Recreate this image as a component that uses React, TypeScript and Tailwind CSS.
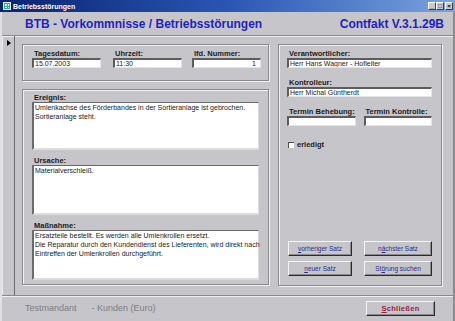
import React from 'react';

const font = { fontFamily: '"Liberation Sans", Arial, sans-serif' };

function Label({ children }: { children: React.ReactNode }) {
    return <div className="h-[9px] text-[7.5px] leading-[9px] font-bold text-[#1c1c1c] pl-[2px] whitespace-nowrap">{children}</div>;
}

function Field({ value, right, className }: { value?: string; right?: boolean; className?: string }) {
    return (
        <div
            className={`h-[10px] bg-white border-t-[2px] border-l-[2px] border-t-[#5c5c5c] border-l-[#5c5c5c] border-b border-r border-b-[#e4e4e4] border-r-[#e4e4e4] text-[7px] leading-[8px] text-[#1a1a1a] px-[1px] whitespace-nowrap overflow-hidden ${right ? 'text-right pr-[4px]' : ''} ${className ?? ''}`}
        >
            {value}
        </div>
    );
}

function Memo({ lines, h }: { lines: string[]; h: string }) {
    return (
        <div className={`${h} bg-white border-t border-l-[2px] border-t-[#6a6a6a] border-l-[#6a6a6a] border-b-[2px] border-r border-b-[#dcdcdc] border-r-[#dcdcdc] text-[7px] leading-[9px] text-[#1a1a1a] px-[1px]`}>
            {lines.map((l) => (
                <div key={l} className="whitespace-nowrap">{l}</div>
            ))}
        </div>
    );
}

function Btn({ children, className }: { children: React.ReactNode; className?: string }) {
    return (
        <div
            className={`h-[15px] flex items-center justify-center border border-t-[#f4f4f4] border-l-[#f4f4f4] border-b-[#2c2c2c] border-r-[#2c2c2c] shadow-[inset_-1px_-1px_0_#8a8a8a] text-[6.5px] text-[#2b2b8e] ${className ?? ''}`}
        >
            {children}
        </div>
    );
}

const frame = 'border border-[#8a8a8c] shadow-[inset_1px_1px_0_#f2f2f2,1px_1px_0_#f2f2f2]';

export default function App() {
    return (
        <div className="w-[455px] h-[321px] bg-[#c6c6ca] flex flex-col overflow-hidden" style={font}>
            {/* title bar */}
            <div className="h-[12px] flex items-center pl-[3px] pr-[2px] bg-gradient-to-r from-[#0a2470] via-[#2a56b4] to-[#7aa2de]">
                <div className="w-[8px] h-[8px] bg-[#3aa8a0] border border-[#e0f0f0] grid grid-cols-2 gap-px p-px">
                    <div className="bg-[#d8f0ec]" />
                    <div className="bg-[#d8f0ec]" />
                    <div className="bg-[#d8f0ec]" />
                    <div className="bg-[#d8f0ec]" />
                </div>
                <span className="ml-[2px] text-[7px] font-bold text-white leading-none">Betriebsstörungen</span>
                <div className="ml-auto flex gap-0">
                    {['_', '□', '×'].map((c, i) => (
                        <div
                            key={c}
                            className={`w-[8px] h-[8px] bg-[#c8c8cc] border border-t-white border-l-white border-b-[#404040] border-r-[#404040] text-[6px] leading-[6px] text-black text-center font-bold ${i === 2 ? 'ml-[1px]' : ''}`}
                        >
                            {c}
                        </div>
                    ))}
                </div>
            </div>

            <div className="flex-1 flex flex-col border-l-2 border-l-[#e0e0e2] border-r-2 border-r-[#8c8c8e]">
                {/* header */}
                <div className="h-[24px] flex items-center justify-between pl-[23px] pr-[9px] border-b border-b-[#8a8a8c] shadow-[0_1px_0_#f0f0f0]">
                    <span className="text-[12px] font-bold text-[#1f1fc2] leading-none">BTB - Vorkommnisse / Betriebsstörungen</span>
                    <span className="text-[12px] font-bold text-[#1f1fc2] leading-none">Contfakt V.3.1.29B</span>
                </div>

                {/* main */}
                <div className="h-[259px] flex">
                    <div className="w-[13px] border-l border-l-[#eaeaea] border-r border-r-[#6e6e70] pt-[4px] pl-[4px]">
                        <div className="w-0 h-0 border-t-[3px] border-b-[3px] border-l-[4px] border-t-transparent border-b-transparent border-l-black" />
                    </div>
                    <div className="flex gap-[9px] pl-[7px] pt-[8px]">
                        {/* left column */}
                        <div className="w-[247px] flex flex-col gap-[8px]">
                            <div className={`h-[37px] ${frame} pl-[9px] pt-[4px]`}>
                                <div className="flex">
                                    <div className="w-[69px]">
                                        <Label>Tagesdatum:</Label>
                                        <Field value="15.07.2003" />
                                    </div>
                                    <div className="w-[69px] ml-[12px]">
                                        <Label>Uhrzeit:</Label>
                                        <Field value="11:30" />
                                    </div>
                                    <div className="w-[69px] ml-[10px]">
                                        <Label>lfd. Nummer:</Label>
                                        <Field value="1" right />
                                    </div>
                                </div>
                            </div>
                            <div className={`h-[196px] ${frame} px-[9px] pt-[3px]`}>
                                <Label>Ereignis:</Label>
                                <Memo h="h-[48px]" lines={['Umlenkachse des Förderbandes in der Sortieranlage ist gebrochen.', 'Sortieranlage steht.']} />
                                <div className="mt-[6px]">
                                    <Label>Ursache:</Label>
                                </div>
                                <Memo h="h-[50px]" lines={['Materialverschleiß.']} />
                                <div className="mt-[6px]">
                                    <Label>Maßnahme:</Label>
                                </div>
                                <Memo
                                    h="h-[50px]"
                                    lines={[
                                        'Ersatzteile bestellt. Es werden alle Umlenkrollen ersetzt.',
                                        'Die Reparatur durch den Kundendienst des Lieferenten, wird direkt nach',
                                        'Eintreffen der Umlenkrollen durchgeführt.',
                                    ]}
                                />
                            </div>
                        </div>

                        {/* right column */}
                        <div className={`w-[164px] h-[242px] ${frame} pl-[8px] pr-[9px] pt-[4px] flex flex-col`}>
                            <Label>Verantwortlicher:</Label>
                            <Field value="Herr Hans Wagner - Hofleiter" />
                            <div className="mt-[10px]">
                                <Label>Kontrolleur:</Label>
                            </div>
                            <Field value="Herr Michal Güntherdt" />
                            <div className="mt-[10px] flex gap-[8px]">
                                <div className="w-[69px]">
                                    <Label>Termin Behebung:</Label>
                                    <Field />
                                </div>
                                <div className="w-[69px]">
                                    <Label>Termin Kontrolle:</Label>
                                    <Field />
                                </div>
                            </div>
                            <div className="mt-[15px] flex items-center gap-[3px] pl-[1px]">
                                <div className="w-[6px] h-[6px] bg-white border-t border-l border-t-[#505050] border-l-[#505050]" />
                                <span className="text-[7.5px] font-bold text-[#1c1c1c] leading-none">erledigt</span>
                            </div>
                            <div className="mt-auto mb-[9px] grid grid-cols-[64px_68px] gap-x-[12px] gap-y-[5px] pl-[1px]">
                                <Btn><span><u>v</u>orheriger Satz</span></Btn>
                                <Btn><span>n<u>ä</u>chster Satz</span></Btn>
                                <Btn><span><u>n</u>euer Satz</span></Btn>
                                <Btn><span>St<u>ö</u>rung suchen</span></Btn>
                            </div>
                        </div>
                    </div>
                </div>

                {/* footer */}
                <div className="flex-1 flex items-start border-t border-t-[#8a8a8c] shadow-[inset_0_1px_0_#f0f0f0] pl-[23px] pr-[18px] pt-[5px]">
                    <span className="text-[9px] text-[#7c7c80] leading-none mt-[3px]">Testmandant</span>
                    <span className="text-[9px] text-[#7c7c80] leading-none mt-[3px] ml-[15px]">- Kunden (Euro)</span>
                    <Btn className="ml-auto w-[69px] !text-[7.5px] font-bold !text-[#9a1c3c] tracking-[0.3px]">
                        <span><u>S</u>chließen</span>
                    </Btn>
                </div>
            </div>
        </div>
    );
}
